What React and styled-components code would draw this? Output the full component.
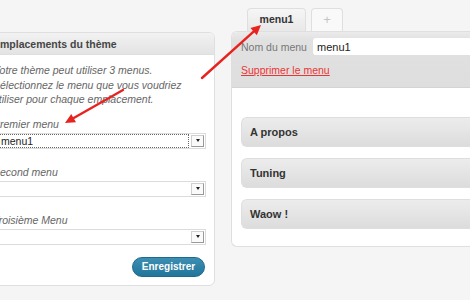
import React from "react";
import styled, { createGlobalStyle } from "styled-components";

const GlobalStyle = createGlobalStyle`
  html, body {
    margin: 0;
    padding: 0;
    background: #f5f5f5;
    font-family: "Liberation Sans", Arial, sans-serif;
  }
`;

const Page = styled.div`
  position: relative;
  width: 470px;
  height: 300px;
  overflow: hidden;
  display: flex;
  align-items: flex-start;
  gap: 16px;
`;

const LeftPanel = styled.div`
  flex-shrink: 0;
  width: 233px;
  box-sizing: border-box;
  margin-left: -18px;
  margin-top: 32px;
  border: 1px solid #dfdfdf;
  border-radius: 6px;
  background: #fff;
  overflow: hidden;
`;

const PanelHeader = styled.div`
  height: 21px;
  padding: 0 10px;
  display: flex;
  align-items: center;
  background: linear-gradient(#f2f2f2, #e3e3e3);
  border-bottom: 1px solid #dfdfdf;
  font-size: 10.5px;
  font-weight: bold;
  color: #464646;
  white-space: nowrap;
`;

const PanelBody = styled.div`
  padding: 8px 8px 8px 10px;
  display: flex;
  flex-direction: column;
`;

const Intro = styled.p`
  margin: 0 0 10px;
  font-size: 10.5px;
  line-height: 14.5px;
  font-style: italic;
  color: #666;
  white-space: nowrap;
`;

const Label = styled.div`
  font-size: 10.5px;
  font-style: italic;
  color: #666;
  line-height: 14px;
  margin-bottom: 2px;
`;

const Field = styled.div`
  margin-bottom: ${(p) => (p.$last ? "12px" : "16px")};
`;

const Select = styled.div`
  height: 14px;
  border: 1px solid #dcdcdc;
  background: #fff;
  display: flex;
  align-items: stretch;
  font-size: 10.5px;
  color: #222;
`;

const SelectValue = styled.div`
  flex: 1;
  display: flex;
  align-items: center;
  padding-left: 6px;
  border: 1px dotted ${(p) => (p.$focused ? "#666" : "transparent")};
`;

const SelectArrow = styled.div`
  width: 11px;
  margin: 1px 1px 1px 2px;
  border: 1px solid #cfcfcf;
  border-right-color: #999;
  border-bottom-color: #999;
  background: #fafafa;
  display: flex;
  align-items: center;
  justify-content: center;
  &::after {
    content: "";
    border-left: 2.5px solid transparent;
    border-right: 2.5px solid transparent;
    border-top: 3px solid #222;
  }
`;

const Actions = styled.div`
  display: flex;
  justify-content: flex-end;
  padding-right: 1px;
`;

const SaveButton = styled.div`
  width: 73px;
  height: 20px;
  border-radius: 10px;
  background: linear-gradient(#3c8fb2, #21759b);
  border: 1px solid #1e6a8d;
  box-sizing: border-box;
  color: #fff;
  font-size: 10px;
  font-weight: bold;
  display: flex;
  align-items: center;
  justify-content: center;
`;

const RightColumn = styled.div`
  flex-shrink: 0;
  width: 260px;
  margin-top: 8px;
  display: flex;
  flex-direction: column;
`;

const Tabs = styled.div`
  display: flex;
  gap: 5px;
  padding-left: 16px;
  height: 23px;
`;

const Tab = styled.div`
  width: ${(p) => (p.$active ? "59px" : "32px")};
  box-sizing: border-box;
  border: 1px solid #dfdfdf;
  border-bottom: none;
  border-radius: 4px 4px 0 0;
  background: ${(p) => (p.$active ? "linear-gradient(#f6f6f6, #e8e8e8)" : "#f9f9f9")};
  display: flex;
  align-items: center;
  justify-content: center;
  font-size: ${(p) => (p.$active ? "10.5px" : "13px")};
  font-weight: ${(p) => (p.$active ? "bold" : "normal")};
  color: ${(p) => (p.$active ? "#333" : "#c4c4c4")};
  padding-bottom: 2px;
`;

const MenuPanel = styled.div`
  border: 1px solid #dfdfdf;
  border-right: none;
  border-radius: 6px 0 0 6px;
  background: #fff;
  overflow: hidden;
  height: 216px;
  box-sizing: border-box;
`;

const MenuHeader = styled.div`
  height: 56px;
  box-sizing: border-box;
  background: linear-gradient(#ebebeb 0, #e1e1e1 8px, #dedede);
  border-bottom: 1px solid #d4d4d4;
  padding: 6px 0 0 9px;
`;

const NameRow = styled.div`
  display: flex;
  align-items: center;
  gap: 10px;
`;

const NameLabel = styled.div`
  width: 62px;
  font-size: 10.5px;
  color: #777;
  white-space: nowrap;
`;

const NameInput = styled.div`
  flex: 1;
  height: 17px;
  background: #fff;
  border-radius: 3px 0 0 3px;
  display: flex;
  align-items: center;
  padding-left: 4px;
  font-size: 11px;
  color: #222;
`;

const DeleteLink = styled.div`
  margin-top: 9px;
  font-size: 10.5px;
  color: #e33;
  text-decoration: underline;
`;

const MenuBody = styled.div`
  padding: 29px 0 0 9px;
  display: flex;
  flex-direction: column;
  gap: 11px;
`;

const Item = styled.div`
  height: 30px;
  box-sizing: border-box;
  border: 1px solid #dedede;
  border-right: none;
  border-radius: 6px 0 0 6px;
  background: linear-gradient(#ececec 0, #e6e6e6 40%, #dcdcdc 100%);
  display: flex;
  align-items: center;
  padding-left: 8px;
  font-size: 11px;
  font-weight: bold;
  color: #333;
`;

const Arrows = styled.svg`
  position: absolute;
  left: 0;
  top: 0;
  pointer-events: none;
`;

const Arrow = ({ x1, y1, x2, y2 }) => {
  const a = Math.atan2(y2 - y1, x2 - x1);
  const len = 11;
  const spread = 0.45;
  const p1 = [x2 - len * Math.cos(a - spread), y2 - len * Math.sin(a - spread)];
  const p2 = [x2 - len * Math.cos(a + spread), y2 - len * Math.sin(a + spread)];
  const bx = x2 - 7 * Math.cos(a);
  const by = y2 - 7 * Math.sin(a);
  return (
    <g>
      <line x1={x1} y1={y1} x2={bx} y2={by} stroke="#e8231f" strokeWidth="2.4" strokeLinecap="round" />
      <polygon points={`${x2},${y2} ${p1[0]},${p1[1]} ${p2[0]},${p2[1]}`} fill="#e8231f" />
    </g>
  );
};

const locations = [
  { label: "Premier menu", value: "menu1", focused: true },
  { label: "Second menu", value: "" },
  { label: "Troisième Menu", value: "" },
];

const items = ["A propos", "Tuning", "Waow !"];

export default function App() {
  return (
    <>
      <GlobalStyle />
      <Page>
        <LeftPanel>
          <PanelHeader>Emplacements du thème</PanelHeader>
          <PanelBody>
            <Intro>
              Votre thème peut utiliser 3 menus.
              <br />
              Sélectionnez le menu que vous voudriez
              <br />
              utiliser pour chaque emplacement.
            </Intro>
            {locations.map((l, i) => (
              <Field key={l.label} $last={i === locations.length - 1}>
                <Label>{l.label}</Label>
                <Select>
                  <SelectValue $focused={l.focused}>{l.value}</SelectValue>
                  <SelectArrow />
                </Select>
              </Field>
            ))}
            <Actions>
              <SaveButton>Enregistrer</SaveButton>
            </Actions>
          </PanelBody>
        </LeftPanel>
        <RightColumn>
          <Tabs>
            <Tab $active>menu1</Tab>
            <Tab>+</Tab>
          </Tabs>
          <MenuPanel>
            <MenuHeader>
              <NameRow>
                <NameLabel>Nom du menu</NameLabel>
                <NameInput>menu1</NameInput>
              </NameRow>
              <DeleteLink>Supprimer le menu</DeleteLink>
            </MenuHeader>
            <MenuBody>
              {items.map((i) => (
                <Item key={i}>{i}</Item>
              ))}
            </MenuBody>
          </MenuPanel>
        </RightColumn>
        <Arrows width="470" height="300">
          <Arrow x1={202} y1={78} x2={261} y2={25} />
          <Arrow x1={123} y1={90} x2={65} y2={123} />
        </Arrows>
      </Page>
    </>
  );
}
